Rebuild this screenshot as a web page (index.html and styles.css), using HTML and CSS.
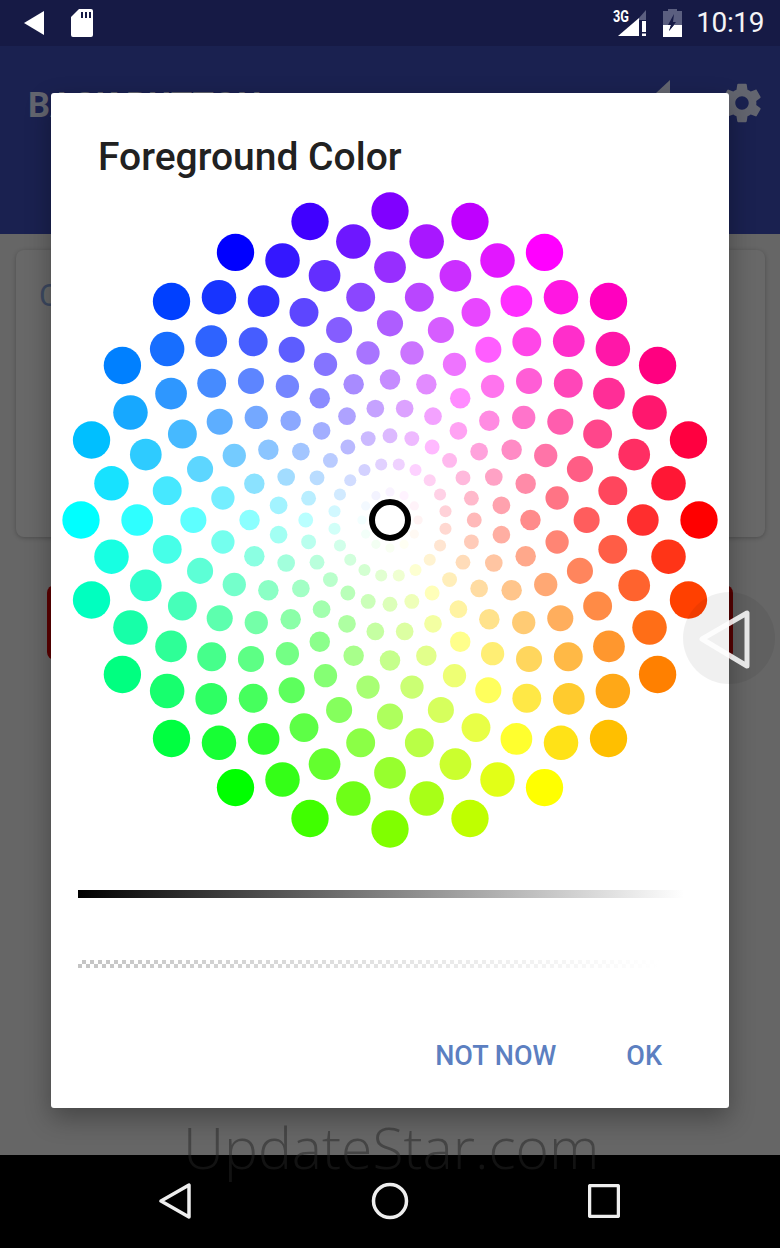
FILE: index.html
```html
<!DOCTYPE html>
<html lang="en">
<head>
<meta charset="utf-8">
<title>Foreground Color</title>
<link rel="stylesheet" href="styles.css">
</head>
<body>
<div class="screen">
  <header class="status">
    <svg class="ic-back" viewBox="0 0 20 24"><path d="M20 0V24L0 12Z"/></svg>
    <svg class="ic-sd" viewBox="0 0 22 28"><path fill-rule="evenodd" d="M8 0H20a2 2 0 0 1 2 2V26a2 2 0 0 1-2 2H2a2 2 0 0 1-2-2V8ZM10 3V9H12V3ZM14 3V9H16V3ZM18 3V9H20V3Z"/></svg>
    <div class="status-right">
      <svg class="ic-signal" viewBox="0 -4 35 32">
        <text class="net" x="1" y="13" textLength="16" lengthAdjust="spacingAndGlyphs">3G</text>
        <path class="dim" d="M27 9L34 1V11H27Z"/>
        <path d="M6 27L27 9V27Z"/>
        <path d="M30 12H34V23H30ZM30 24.500H34V27H30Z"/>
      </svg>
      <svg class="ic-batt" viewBox="0 0 19 28">
        <path class="dim" d="M5 0H14V2H19V16H0V2H5Z"/>
        <path d="M0 16H8L6 22L11 16H19V28H0Z"/>
        <path class="bolt" d="M11 5L5 16H8L6 22L13 13H10Z"/>
      </svg>
      <span class="time">10:19</span>
    </div>
  </header>
  <div class="appbar">
    <span class="app-title">BACK BUTTON</span>
    <svg class="ic-sliver" viewBox="0 0 14 14"><path d="M0 13L14 0V13Z"/></svg>
    <svg class="ic-gear" viewBox="0 0 24 24"><path d="M19.430 12.980c.04-.32.07-.64.07-.98s-.03-.66-.07-.98l2.110-1.650c.19-.15.24-.42.12-.64l-2-3.460c-.12-.22-.39-.3-.61-.22l-2.490 1c-.52-.4-1.080-.73-1.690-.98l-.38-2.650C14.460 2.180 14.250 2 14 2h-4c-.25 0-.46.18-.49.42l-.38 2.650c-.61.25-1.170.59-1.690.98l-2.490-1c-.23-.09-.49 0-.61.22l-2 3.460c-.13.22-.07.49.12.64l2.110 1.650c-.04.32-.07.65-.07.98s.03.66.07.98l-2.110 1.650c-.19.15-.24.42-.12.64l2 3.460c.12.22.39.3.61.22l2.490-1c.52.4 1.080.73 1.690.98l.38 2.650c.03.24.24.42.49.42h4c.25 0 .46-.18.49-.42l.38-2.650c.61-.25 1.170-.59 1.690-.98l2.490 1c.23.09.49 0 .61-.22l2-3.460c.12-.22.07-.49-.12-.64l-2.110-1.650zM12 15.500c-1.930 0-3.500-1.570-3.500-3.500s1.570-3.500 3.500-3.500 3.500 1.570 3.500 3.500-1.570 3.500-3.500 3.500z"/></svg>
  </div>
  <main class="content">
    <section class="card"><span class="card-letter">C</span></section>
    <div class="red-button"></div>
  </main>
  <nav class="navbar">
    <svg class="ic-nav nav-back" viewBox="0 0 32 36"><path d="M30 2V34L2 18Z"/></svg>
    <svg class="ic-nav nav-home" viewBox="0 0 38 38"><circle cx="19" cy="19" r="16.500"/></svg>
    <svg class="ic-nav nav-recent" viewBox="0 0 32 34"><rect x="1.500" y="1.500" width="29" height="31" rx="1.500"/></svg>
  </nav>

  <div class="dialog">
    <h1 class="dialog-title">Foreground Color</h1>
    <svg class="wheel" id="wheel" viewBox="0 0 678 678" width="678" height="678">
      <circle class="selector" cx="339" cy="339" r="18"/>
    </svg>
    <div class="bar bar-light"></div>
    <div class="bar bar-alpha"></div>
    <div class="actions">
      <button class="action action-no">NOT NOW</button>
      <button class="action">OK</button>
    </div>
  </div>

  <svg class="float-btn" viewBox="0 0 92 94">
    <circle class="float-bg" cx="46" cy="47" r="46"/>
    <path class="float-tri" d="M19 48L64 22V75Z"/>
  </svg>
  <div class="watermark">UpdateStar.com</div>
</div>
<script src="wheel.js"></script>
</body>
</html>
```
FILE: styles.css
```css
* { box-sizing: border-box; margin: 0; padding: 0; }
html, body { width: 780px; height: 1248px; overflow: hidden; background: #000; }
body { font-family: Roboto, "Liberation Sans", sans-serif; }
.screen { position: relative; width: 780px; height: 1248px; display: flex; flex-direction: column; overflow: hidden; }

.status { height: 46px; flex: none; background: #161a45; display: flex; align-items: center; padding: 0 16px 0 24px; }
.status svg { fill: #fff; display: block; }
.ic-back { width: 20px; height: 24px; }
.ic-sd { width: 22px; height: 28px; margin-left: 27px; }
.status-right { margin-left: auto; display: flex; align-items: center; }
.ic-signal { width: 35px; height: 32px; margin-top: -4px; }
.net { font: 700 16px Roboto, sans-serif; fill: #fff; }
.status .dim { fill: #5b5f80; }
.status .bolt { fill: #161a45; }
.ic-batt { width: 19px; height: 28px; margin-left: 16px; }
.time { margin-left: 14px; color: #f4f4f6; font-size: 28px; line-height: 34px; font-weight: 400; letter-spacing: -.4px; }

.appbar { height: 188px; flex: none; background: #1a2150; display: flex; align-items: flex-start; padding: 38px 14px 0 28px; }
.app-title { font-size: 34.500px; line-height: 42px; font-weight: 700; color: #63656f; white-space: nowrap; }
.ic-sliver { width: 14px; height: 14px; fill: #63656f; margin: -4px 0 0 auto; }
.ic-gear { width: 46px; height: 46px; fill: #63656f; margin: -4px 1px 0 49px; }

.content { flex: 1; background: #666; padding: 16px 15px 0 16px; display: flex; flex-direction: column; }
.card { height: 287px; border-radius: 8px; background: #686868; box-shadow: 0 1px 4px rgba(0,0,0,.25); padding: 28px 23px; }
.card-letter { font-size: 31px; line-height: 36px; color: #3c4860; }
.red-button { height: 75px; margin: 48px 32px 0 31px; border-radius: 8px; background: #5c0000; }

.navbar { height: 93px; flex: none; background: #000; position: relative; display: flex; align-items: flex-start; padding: 27px 0 0 159px; }
.ic-nav { fill: none; stroke: #eee; stroke-width: 3.500; stroke-linejoin: round; display: block; }
.nav-back { width: 32px; height: 36px; margin-top: 1px; }
.nav-home { width: 38px; height: 38px; margin-left: 180px; }
.nav-recent { width: 32px; height: 34px; margin: 2px 0 0 179px; }

.dialog { position: absolute; left: 51px; top: 93px; width: 678px; height: 1015px; background: #fff; border-radius: 3px; box-shadow: 0 10px 26px rgba(0,0,0,.32); display: flex; flex-direction: column; }
.dialog-title { height: 88px; padding: 43px 0 0 47px; font-size: 39px; line-height: 42px; font-weight: 500; color: #212121; white-space: nowrap; }
.wheel { display: block; flex: none; }
.selector { fill: #fff; stroke: #000; stroke-width: 6; }
.bar { width: 606px; height: 8px; margin-left: 27px; flex: none; }
.bar-light { margin-top: 31px; background: linear-gradient(to right, #000, #fff); }
.bar-alpha { margin-top: 62px; background: linear-gradient(to right, rgba(255,255,255,0), #fff 96%), repeating-conic-gradient(#c4c4c4 0 25%, #fff 0 50%) 0 0 / 8px 8px; }
.actions { display: flex; justify-content: flex-end; padding: 72px 67px 0 0; }
.action { border: 0; background: none; font-family: Roboto, sans-serif; font-size: 27px; line-height: 32px; font-weight: 500; color: #5c7fc1; }
.action-no { margin-right: 70px; }

.float-btn { position: absolute; left: 683px; top: 591px; width: 92px; height: 94px; }
.float-bg { fill: rgba(0,0,0,.06); }
.float-tri { fill: none; stroke: rgba(255,255,255,.85); stroke-width: 5; stroke-linejoin: round; }

.watermark { position: absolute; left: 183px; top: 1109px; font-family: "Open Sans", sans-serif; font-weight: 300; font-size: 57px; line-height: 76px; color: rgba(36,36,36,.5); white-space: nowrap; }
```
FILE: wheel.js
```js
(function () {
  var svg = document.getElementById('wheel');
  var selector = svg.querySelector('.selector');
  var NS = 'http://www.w3.org/2000/svg';
  var half = 339, density = 12, maxRadius = 309, cSize = maxRadius / (density - 1) / 2;
  var stroke = 2.4, jitterAmount = 1.2, gap = 0.025;

  function hsv(h, s) {
    var c = s, x = c * (1 - Math.abs((h / 60) % 2 - 1)), m = 1 - c;
    var seg = Math.floor(h / 60) % 6;
    var rgb = [[c, x, 0], [x, c, 0], [0, c, x], [0, x, c], [x, 0, c], [c, 0, x]][seg];
    return 'rgb(' + rgb.map(function (v) { return Math.round((v + m) * 255); }).join(',') + ')';
  }

  for (var i = 1; i < density; i++) {
    var jitter = (i - density / 2) / density;
    var radius = maxRadius * i / (density - 1);
    var size = cSize + cSize * jitterAmount * jitter;
    var total = Math.min(Math.floor((1 - gap) * Math.PI / Math.asin(size / radius) + 0.5), density * 2);
    var saturation = radius / maxRadius * (i === 1 ? 0.5 : 1);
    for (var j = 0; j < total; j++) {
      var angle = Math.PI * 2 * j / total + (Math.PI / total) * ((i + 1) % 2);
      var dot = document.createElementNS(NS, 'circle');
      dot.setAttribute('cx', (half + radius * Math.cos(angle)).toFixed(2));
      dot.setAttribute('cy', (half + radius * Math.sin(angle)).toFixed(2));
      dot.setAttribute('r', (size - stroke).toFixed(2));
      dot.setAttribute('fill', hsv(angle * 180 / Math.PI, saturation));
      svg.insertBefore(dot, selector);
    }
  }
})();
```
